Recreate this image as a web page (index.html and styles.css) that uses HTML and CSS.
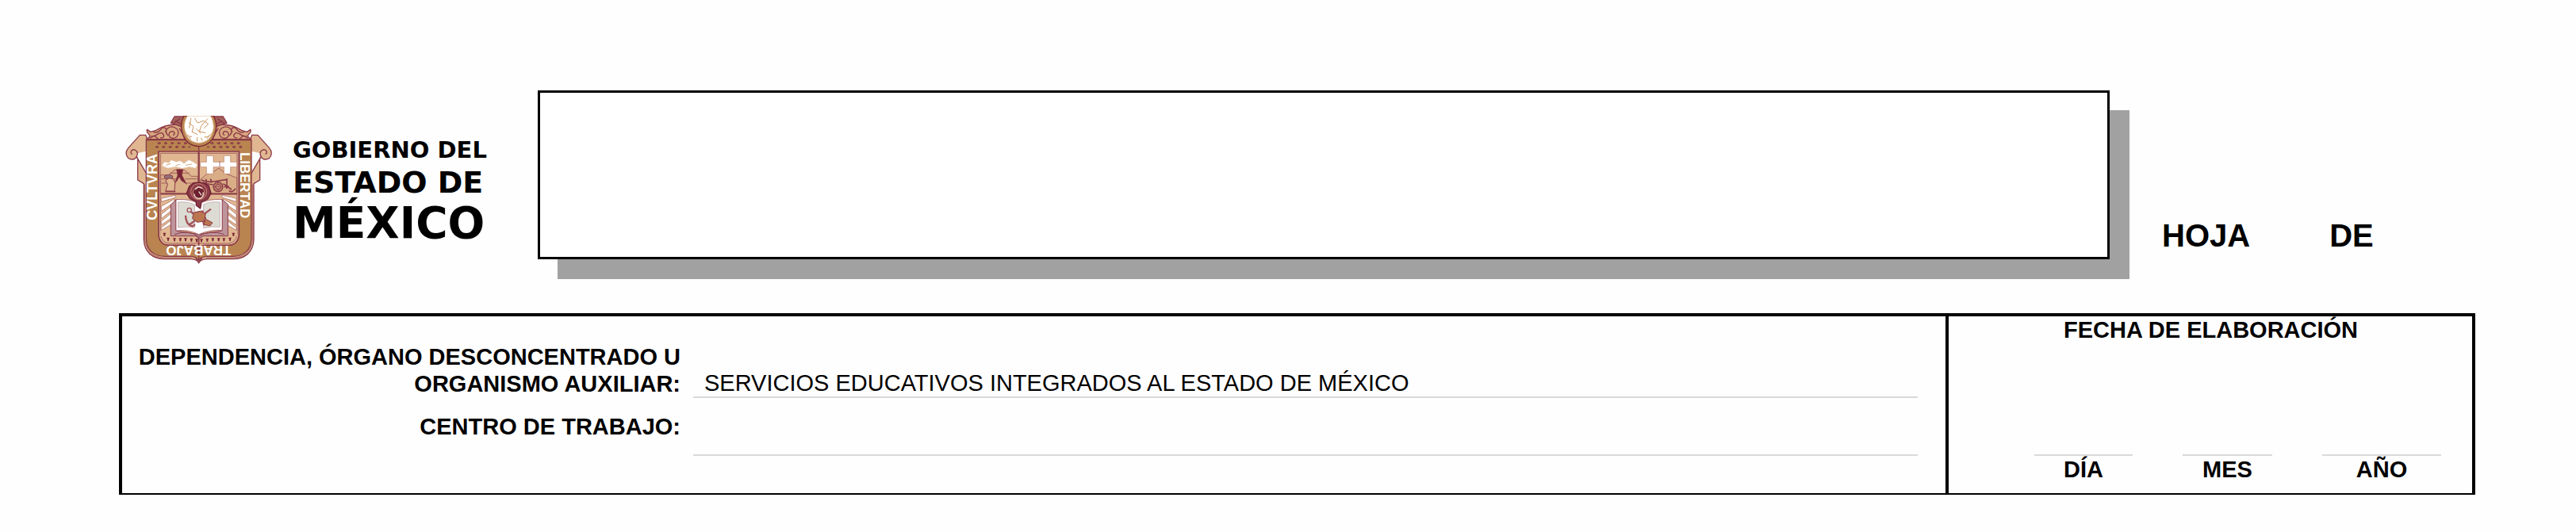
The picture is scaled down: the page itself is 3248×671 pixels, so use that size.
FILE: index.html
```html
<!DOCTYPE html>
<html lang="es">
<head>
<meta charset="utf-8">
<title>Gobierno del Estado de México</title>
<link rel="stylesheet" href="styles.css">
</head>
<body>
<main class="page">
  <header class="header">
    <div class="brand">
      <svg class="emblem" viewBox="48 51 561 561" role="img" aria-label="Escudo del Estado de México">
        <defs>
          <g id="half">
            <path d="M332 140H137L131 124H109L66 172C50 190 58 216 80 216C98 216 108 188 90 180C78 176 70 190 80 197M96 205L101 212V294L124 308V520C126 568 158 592 202 593H302Q326 594 332 608Z" fill="#e0b791"/>
            <path d="M332 143H133V515C134 558 160 583 206 583H304Q326 586 332 600Z" fill="#b98450"/>
            <path d="M128 310V516C131 562 160 588 204 588H304" fill="none" stroke-width="2"/>
            <path d="M332 186H180V500Q182 540 222 541H312Q328 544 332 556Z" fill="#e0b791" stroke-width="5"/>
            <path d="M332 193H187V498Q190 534 224 534H332" fill="none" stroke-width="2"/>
            <path d="M134 140L148 128L136 112V103L150 112L170 106Q205 84 248 84L262 76L276 108Q280 130 290 140Z" fill="#d7a67e"/>
            <path d="M226 78L240 54H284L266 92Z" fill="#a4625a"/>
            <path d="M216 126C195 106 220 86 242 96C264 108 254 138 232 136C214 132 216 112 231 110C243 111 242 124 234 124M152 128C168 134 176 114 192 116C204 124 202 137 186 134M160 112Q178 120 192 98C204 90 216 106 204 112M258 98L270 118M146 136L164 126L178 139M234 80L262 62M244 70L264 82" fill="none" stroke-width="4"/>
            <g fill="none" stroke-width="5">
              <path d="M176 155H300" stroke-dasharray="12 13"/>
              <path d="M168 169H300" stroke-dasharray="12 13"/>
              <path d="M182 150V160M206 150V160M231 150V160M255 150V160M280 150V160M174 164V174M198 164V174M224 164V174M248 164V174M273 164V174" stroke-width="3"/>
            </g>
          </g>
          <g id="rays">
            <path d="M190 364L244 352V360L190 376ZM190 394L240 366V378L190 412ZM190 424L238 386V402L190 440ZM190 450L228 420V438L190 464ZM190 474L228 446V462L190 484Z" fill="#fff" stroke="#a4625a" stroke-width="2"/>
          </g>
          <path id="spike" d="M-6 -5H6L3 1V7H-3V1Z" fill="#7b2636" stroke="none"/>
        </defs>
        <g stroke="#8b3a48" stroke-width="4" stroke-linejoin="round">
          <use href="#half"/>
          <use href="#half" transform="matrix(-1 0 0 1 664 0)"/>
          <path d="M332 190V350M187 347H477" fill="none" stroke-width="5"/>
          <path d="M187 275H218L240 256H278L304 280H328V344H187Z" fill="#d9ad86" stroke-width="2"/>
          <path d="M190 290H246M190 306H236M280 290H326M286 306H326M222 268H296" fill="none" stroke-width="2"/>
          <path d="M193 240L202 226L218 230L228 219L246 226L262 222L276 232L294 218L310 226L326 236L320 249L296 244L270 250L246 244L214 249Z" fill="#fff" stroke="#e8d4c2" stroke-width="2"/>
          <path d="M208 238L226 232M244 240L262 234M282 238L306 234" fill="none" stroke="#d3a784" stroke-width="3"/>
          <path d="M248 254H272L268 276L286 310L266 296L258 282L250 296L240 308L252 276Z" fill="#7b2636" stroke-width="2"/>
          <path d="M206 336L214 310L206 296L222 286L236 290L242 304L240 336Z" fill="#e0b791" stroke-width="3"/>
          <path d="M201 280Q216 268 234 280L230 290Q218 280 204 288Z" fill="#8f7480" stroke-width="3"/>
          <path d="M206 338H244" fill="none" stroke-width="4"/>
          <path d="M338 292L362 272L382 266L408 249L434 270L476 286V344H338Z" fill="#d9ad86" stroke-width="2"/>
          <path d="M338 226H361V202H387V226H427V202H452V226H476V245H452V271H427V245H387V271H361V245H338Z" fill="#fff" stroke="#b97c67" stroke-width="2"/>
          <path d="M411 222V245" stroke-width="2"/>
          <path d="M342 294Q366 304 388 300L440 292M438 288V328M348 306L386 312M424 308L456 330M446 334Q454 342 464 334Q472 328 468 326M428 320L446 318M360 290V306M376 290L382 304" fill="none" stroke-width="5"/>
          <circle cx="405" cy="320" r="18" fill="#b97c67"/>
          <circle cx="405" cy="320" r="9" fill="#d9ad86" stroke-width="3"/>
          <path d="M387 320H423M405 302V338" stroke-width="2"/>
          <use href="#rays"/>
          <use href="#rays" transform="matrix(-1 0 0 1 664 0)"/>
          <path d="M187 486L228 480L226 506H187ZM477 486L438 480L442 506H477Z" fill="#e0b791" stroke="none"/>
          <path d="M226 388L246 368V486L332 500L420 486V368L442 386V506H350L334 514L318 506H226Z" fill="#bd949a" stroke-width="3"/>
          <path d="M246 368Q300 364 332 384Q370 364 420 368V484Q370 482 332 500Q290 480 246 486Z" fill="#fff" stroke-width="2"/>
          <path d="M254 378Q292 374 316 388V474Q290 468 254 474ZM350 386Q376 374 412 378V472Q380 468 350 476Z" fill="#dcdcd4" stroke="#bd949a" stroke-width="2"/>
          <path d="M240 500Q290 480 332 508Q372 480 428 500" fill="none" stroke-width="3"/>
          <g fill="none" stroke="#a4525a" stroke-width="7">
            <circle cx="296" cy="408" r="8" stroke-width="4"/>
            <path d="M302 414L362 462M282 428Q282 462 308 470L318 462M378 404L298 462M318 418L350 412M312 438H360M342 424L352 466"/>
          </g>
          <path d="M312 418L338 412L358 422L352 450L326 454L308 440ZM358 442L384 456L374 468L350 462Z" fill="#bb7650" stroke-width="3"/>
          <path d="M286 344L296 318L314 304H350L370 316L378 344L366 366L342 378L338 402L322 390V376L298 364Z" fill="#8b3a48" stroke="#6d2030"/>
          <circle cx="332" cy="338" r="30" fill="none" stroke="#c98c76" stroke-width="3"/>
          <circle cx="332" cy="342" r="22" fill="#6d2030" stroke="#c98c76" stroke-width="3"/>
          <path d="M314 346Q318 366 336 364Q352 360 348 340M318 330L330 320L346 326M332 338L342 352" fill="none" stroke="#f1dfd2" stroke-width="4"/>
          <use href="#spike" x="202" y="499"/><use href="#spike" x="216" y="517"/><use href="#spike" x="240" y="519"/><use href="#spike" x="262" y="519"/><use href="#spike" x="282" y="519"/><use href="#spike" x="304" y="520"/><use href="#spike" x="324" y="522"/><use href="#spike" x="342" y="522"/><use href="#spike" x="364" y="520"/><use href="#spike" x="385" y="519"/><use href="#spike" x="407" y="519"/><use href="#spike" x="427" y="519"/><use href="#spike" x="450" y="517"/><use href="#spike" x="463" y="499"/>
          <path d="M276 51H388C410 92 396 164 332 167C268 164 254 92 276 51Z" fill="#b98450" stroke="#7b2636" stroke-width="4"/>
          <path d="M290 51H376C398 84 392 150 332 154C274 150 266 84 290 51Z" fill="#fff" stroke="#e0b791" stroke-width="3"/>
          <path d="M274 96Q284 132 306 130M392 96Q380 134 352 132M294 76L312 92L306 112L328 122M316 60L328 78L350 70L368 82L352 98M366 62L342 88L334 110L358 116M302 60L296 98M322 100L340 118M288 124L302 140M362 138L376 122M326 132V148M340 134L346 146" fill="none" stroke="#c9955f" stroke-width="3"/>
        </g>
        <g class="emblem-text">
          <text transform="translate(175 446) rotate(-90)" font-size="54">CVLTVRA</text>
          <text transform="translate(490 190) rotate(90)" font-size="50">LIBERTAD</text>
          <text transform="translate(454 544) rotate(180)" font-size="51">TRABAJO</text>
        </g>
      </svg>
      <p class="brand-name">
        <span class="brand-small">GOBIERNO DEL</span>
        <span class="brand-medium">ESTADO DE</span>
        <span class="brand-large">MÉXICO</span>
      </p>
    </div>
    <div class="title-box"></div>
    <p class="sheet"><span>HOJA</span><span>DE</span></p>
  </header>

  <form class="form">
    <section class="agency">
      <span class="label">DEPENDENCIA, ÓRGANO DESCONCENTRADO U ORGANISMO AUXILIAR:</span>
      <span class="line value">SERVICIOS EDUCATIVOS INTEGRADOS AL ESTADO DE MÉXICO</span>
      <label class="label label-center" for="centro">CENTRO DE TRABAJO:</label>
      <input class="line" id="centro" type="text">
    </section>
    <fieldset class="date">
      <legend class="date-title">FECHA DE ELABORACIÓN</legend>
      <div class="date-fields">
        <div class="date-field day"><input class="line" id="dia" type="text"><label for="dia">DÍA</label></div>
        <div class="date-field month"><input class="line" id="mes" type="text"><label for="mes">MES</label></div>
        <div class="date-field year"><input class="line" id="anio" type="text"><label for="anio">AÑO</label></div>
      </div>
    </fieldset>
  </form>
</main>
</body>
</html>
```
FILE: styles.css
```css
* {
  box-sizing: border-box;
}

body {
  margin: 0;
  background: #fefefe;
  color: #000;
  font: 29px/34px "Liberation Sans", Arial, sans-serif;
}

p {
  margin: 0;
}

.page {
  padding: 114px 127px 46px 150px;
}

.header {
  display: flex;
  align-items: stretch;
}

.brand {
  display: flex;
  align-items: center;
  gap: 26px;
  width: 528px;
  padding: 32px 0 0 6px;
}

.emblem {
  flex: none;
  width: 187px;
  height: 187px;
}

.emblem-text {
  fill: #fff;
  font-family: "Liberation Sans", Arial, sans-serif;
  font-weight: 700;
}

.brand-name {
  display: flex;
  flex-direction: column;
  font-family: "DejaVu Sans", sans-serif;
  font-weight: 700;
  white-space: nowrap;
}

.brand-small {
  font-size: 29px;
  line-height: 38px;
}

.brand-medium {
  font-size: 38px;
  line-height: 44px;
}

.brand-large {
  font-size: 55px;
  line-height: 58px;
}

.title-box {
  flex: 1;
  height: 213px;
  border: 3px solid #000;
  background: #fff;
  box-shadow: 25px 25px 0 #a1a1a1;
}

.sheet {
  display: flex;
  align-items: flex-end;
  gap: 100px;
  width: 461px;
  padding: 0 0 12px 66px;
  font-size: 40px;
  line-height: 48px;
  font-weight: 700;
}

.form {
  display: grid;
  grid-template-columns: minmax(0, 1fr) 660px;
  margin-top: 62px;
  border: 4px solid #000;
  border-bottom-width: 2px;
}

.agency {
  display: grid;
  grid-template-columns: 704px minmax(0, 1fr);
  grid-template-rows: 103px 73px;
  column-gap: 16px;
  padding: 0 35px 47px 0;
  border-right: 4px solid #000;
}

.label {
  align-self: end;
  padding: 0 0 1px 16px;
  font-weight: 700;
  text-align: right;
}

.label-center {
  align-self: center;
}

.line {
  width: 100%;
  min-width: 0;
  padding: 0;
  border: 0;
  border-bottom: 2px solid #d9d9d9;
  border-radius: 0;
  background: transparent;
  font: inherit;
}

.value {
  align-self: end;
  padding-left: 14px;
}

.date {
  display: flex;
  flex-direction: column;
  justify-content: space-between;
  min-width: 0;
  margin: 0;
  padding: 0 39px 13px 108px;
  border: 0;
  font-weight: 700;
}

.date-title {
  float: left;
  width: 100%;
  margin-left: -34px;
  padding: 0;
  text-align: center;
}

.date-fields {
  display: flex;
  justify-content: space-between;
  width: 100%;
}

.date-field {
  display: flex;
  flex-direction: column;
  text-align: center;
}

.day {
  width: 124px;
}

.month {
  width: 113px;
}

.year {
  width: 150px;
}
```
